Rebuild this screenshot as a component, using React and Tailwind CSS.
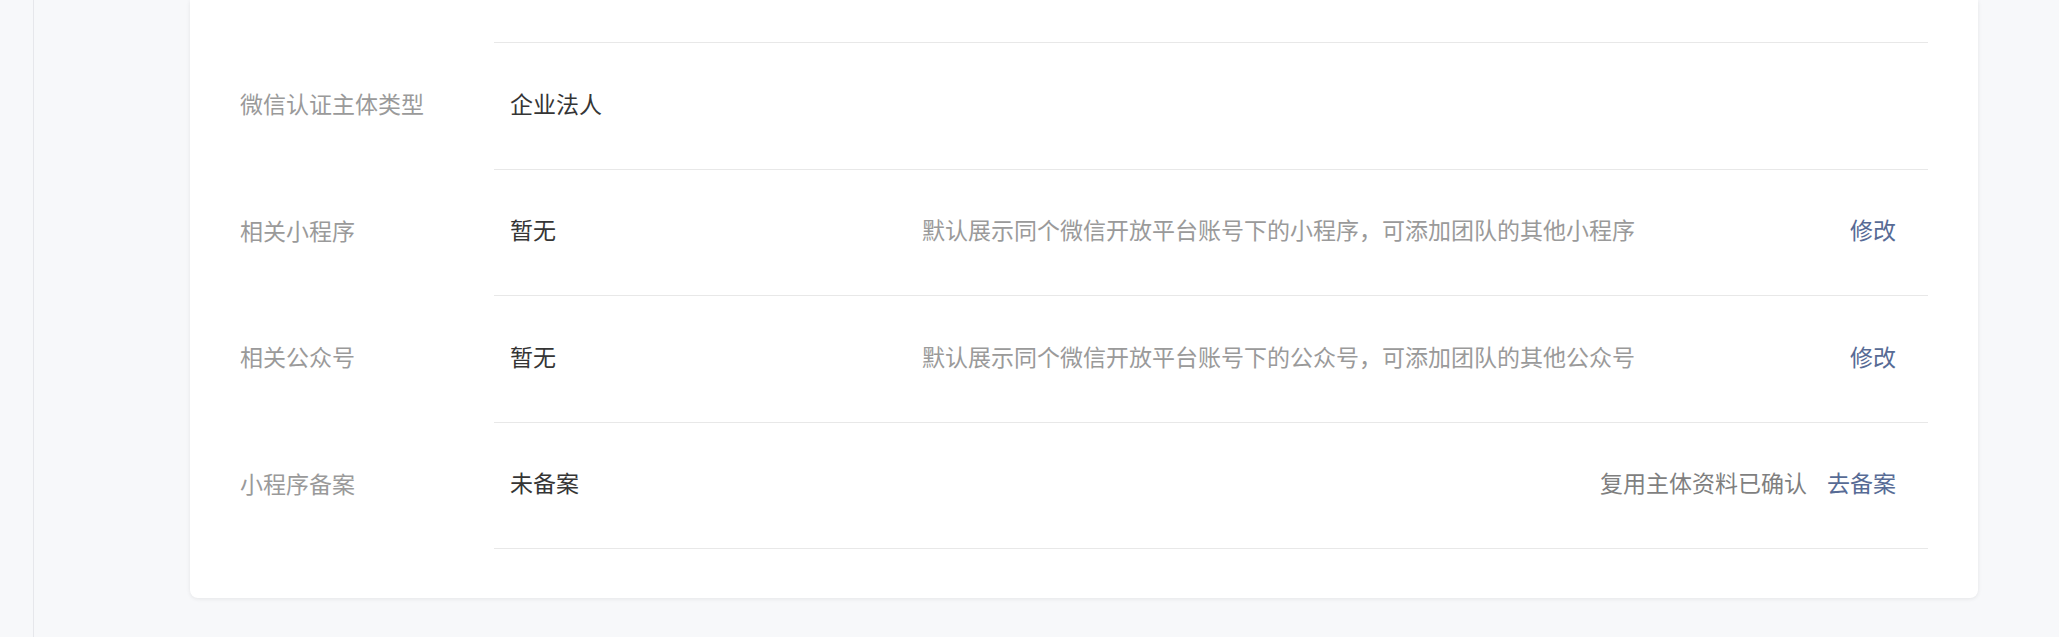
import React from "react";

const rows = [
  { label: "微信认证主体类型", value: "企业法人" },
  {
    label: "相关小程序",
    value: "暂无",
    desc: "默认展示同个微信开放平台账号下的小程序，可添加团队的其他小程序",
    action: "修改",
  },
  {
    label: "相关公众号",
    value: "暂无",
    desc: "默认展示同个微信开放平台账号下的公众号，可添加团队的其他公众号",
    action: "修改",
  },
  {
    label: "小程序备案",
    value: "未备案",
    note: "复用主体资料已确认",
    action: "去备案",
  },
];

const InfoRow = ({ row }) => (
  <div className="flex h-[126.5px]">
    {/* LABEL */}
    <div className="w-[304px] shrink-0 pl-[50px] pb-[5px] flex items-center text-[#9a9a9a]">
      {row.label}
    </div>

    {/* CONTENT */}
    <div className="flex-1 flex items-center border-b border-[#e8e8e8] pl-4 pr-[32px] pb-[5px]">
      <div className="w-[412px] shrink-0 text-[#353535]">{row.value}</div>
      <div className="flex-1 text-[#9a9a9a]">{row.desc}</div>
      {row.note && <span className="text-[#7f7f7f] mr-5">{row.note}</span>}
      {row.action && (
        <button className="text-[#576b95] cursor-pointer">{row.action}</button>
      )}
    </div>
  </div>
);

export default function App() {
  return (
    <div
      className="flex h-[637px] w-full overflow-hidden bg-[#f7f8fa] text-[23px] leading-none"
      style={{ fontFamily: '"Noto Sans CJK SC", "Noto Sans", sans-serif' }}
    >
      {/* SIDEBAR EDGE */}
      <div className="w-[34px] shrink-0 border-r border-[#e6e7eb]" />

      {/* MAIN */}
      <div className="flex-1 pl-[156px] pr-[81px]">
        <div className="bg-white rounded-b-lg shadow-[0_1px_4px_rgba(0,0,0,0.08)] pb-[49px]">
          {/* top row, scrolled mostly out of view */}
          <div className="flex h-[43px]">
            <div className="w-[304px] shrink-0" />
            <div className="flex-1 border-b border-[#e8e8e8] mr-[50px]" />
          </div>
          <div className="pr-[50px]">
            {rows.map((row) => (
              <InfoRow key={row.label} row={row} />
            ))}
          </div>
        </div>
      </div>
    </div>
  );
}
